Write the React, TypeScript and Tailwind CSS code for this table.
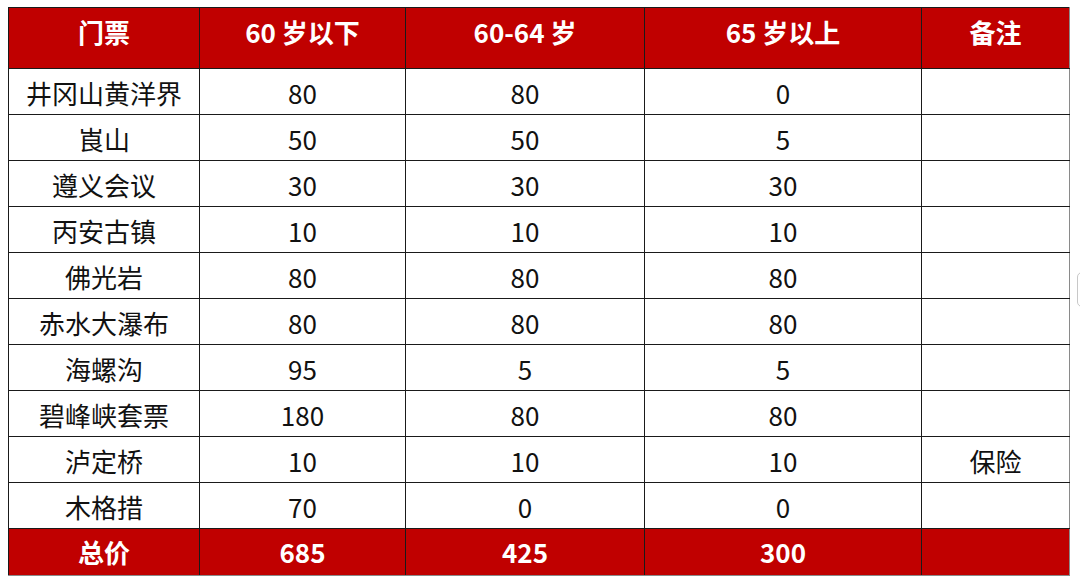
import React from "react";

const rows = [
  { name: "井冈山黄洋界", a: "80", b: "80", c: "0", note: "" },
  { name: "崀山", a: "50", b: "50", c: "5", note: "" },
  { name: "遵义会议", a: "30", b: "30", c: "30", note: "" },
  { name: "丙安古镇", a: "10", b: "10", c: "10", note: "" },
  { name: "佛光岩", a: "80", b: "80", c: "80", note: "" },
  { name: "赤水大瀑布", a: "80", b: "80", c: "80", note: "" },
  { name: "海螺沟", a: "95", b: "5", c: "5", note: "" },
  { name: "碧峰峡套票", a: "180", b: "80", c: "80", note: "" },
  { name: "泸定桥", a: "10", b: "10", c: "10", note: "保险" },
  { name: "木格措", a: "70", b: "0", c: "0", note: "" },
];

const font = {
  fontFamily: '"Microsoft YaHei", "Noto Sans CJK SC", "Noto Sans", sans-serif',
};

export default function App() {
  return (
    <div className="relative h-[582px] w-[1080px] overflow-hidden bg-white" style={font}>
      <div className="pl-[8px] pt-[7px]">
        <table className="w-[1061px] table-fixed border-collapse text-center text-[26px]">
          <colgroup>
            <col className="w-[191px]" />
            <col className="w-[206px]" />
            <col className="w-[239px]" />
            <col className="w-[277px]" />
            <col className="w-[148px]" />
          </colgroup>
          <thead>
            <tr className="h-[61px] bg-[#c00000] font-bold text-white">
              <th className="border border-[#1a1a1a] pb-[12px] font-bold leading-none">门票</th>
              <th className="border border-[#1a1a1a] pb-[12px] font-bold leading-none">60 岁以下</th>
              <th className="border border-[#1a1a1a] pb-[12px] font-bold leading-none">60-64 岁</th>
              <th className="border border-[#1a1a1a] pb-[12px] font-bold leading-none">65 岁以上</th>
              <th className="border border-[#1a1a1a] border-r-[#8a8a8a] pb-[12px] font-bold leading-none">备注</th>
            </tr>
          </thead>
          <tbody className="text-[#111]">
            {rows.map((r) => (
              <tr key={r.name} className="h-[46px]">
                <td className="border border-[#1a1a1a] pt-[2px] leading-none">{r.name}</td>
                <td className="border border-[#1a1a1a] pt-[2px] leading-none">{r.a}</td>
                <td className="border border-[#1a1a1a] pt-[2px] leading-none">{r.b}</td>
                <td className="border border-[#1a1a1a] pt-[2px] leading-none">{r.c}</td>
                <td className="border border-[#1a1a1a] border-r-[#8a8a8a] pt-[2px] leading-none">{r.note}</td>
              </tr>
            ))}
            <tr className="h-[47px] bg-[#c00000] font-bold text-white">
              <td className="border border-[#1a1a1a] border-b-[#8a8a8a] leading-none">总价</td>
              <td className="border border-[#1a1a1a] border-b-[#8a8a8a] leading-none">685</td>
              <td className="border border-[#1a1a1a] border-b-[#8a8a8a] leading-none">425</td>
              <td className="border border-[#1a1a1a] border-b-[#8a8a8a] leading-none">300</td>
              <td className="border border-[#1a1a1a] border-b-[#8a8a8a] border-r-[#8a8a8a] leading-none"></td>
            </tr>
          </tbody>
        </table>
      </div>
      <div className="absolute left-[1077px] top-[272px] h-[35px] w-[20px] rounded-[5px] border border-[#c8c8c8] bg-white" />
    </div>
  );
}
